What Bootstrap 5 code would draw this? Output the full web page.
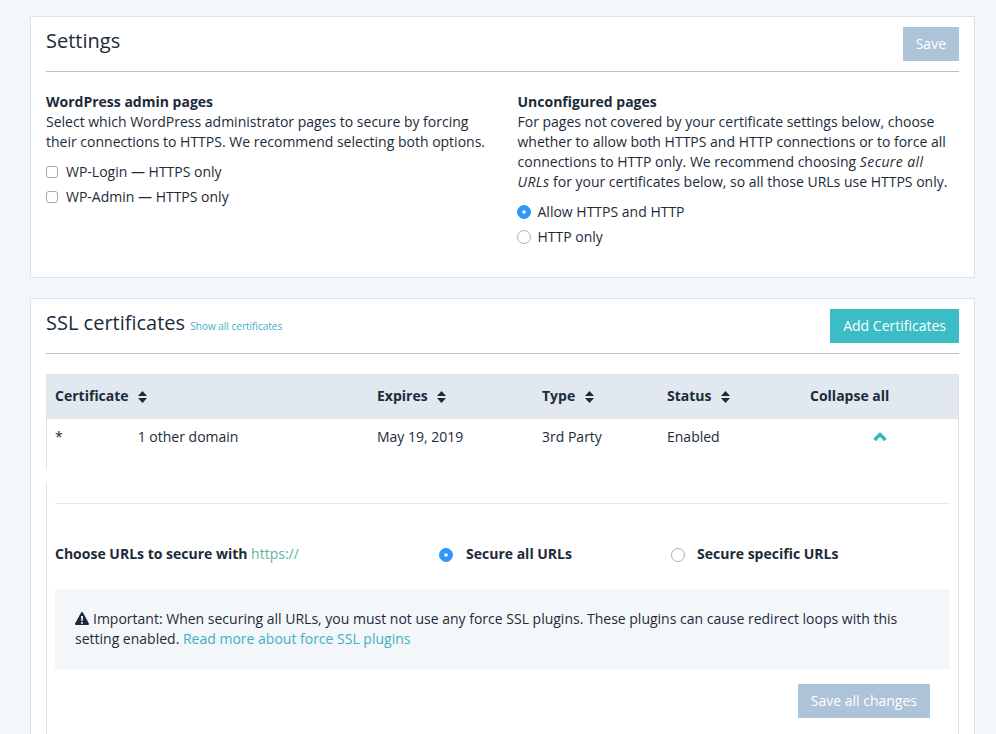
<!DOCTYPE html>
<html lang="en">
<head>
    <meta charset="UTF-8">
    <meta name="viewport" content="width=device-width, initial-scale=1.0">
    <title>SSL settings</title>
    <link href="https://cdn.jsdelivr.net/npm/bootstrap@5.3.3/dist/css/bootstrap.min.css" rel="stylesheet">
    <style>
        html, body {
            height: 734px;
            overflow: hidden;
        }
        body {
            background-color: #f4f7fa;
            color: #1c2b39;
            font-family: "Open Sans", "Liberation Sans", sans-serif;
            font-size: 14px;
            line-height: 20px;
            padding: 16px 21px 0 30px;
        }
        em {
            letter-spacing: .4px;
        }
        .panel-box {
            background-color: #fff;
            border: 1px solid #dfe2e6;
            padding: 10px 15px 0;
            margin-bottom: 20px;
        }
        .settings-box {
            height: 262px;
        }
        .panel-head {
            height: 45px;
            border-bottom: 1px solid #b3c0d1;
        }
        .panel-title {
            font-size: 20px;
            line-height: 28px;
            font-weight: 400;
            margin: 0;
        }
        .panel-title a {
            font-size: 10px;
            line-height: 14px;
        }
        .btn-save, .btn-save:disabled {
            background-color: #adc3d8;
            border: 0;
            border-radius: 0;
            color: #fff;
            opacity: 1;
            font-size: 14px;
            font-weight: 400;
            height: 34px;
            padding: 0 13px;
            line-height: 34px;
        }
        .btn-add {
            background-color: #3bbcc7;
            border: 0;
            border-radius: 0;
            color: #fff;
            font-size: 14px;
            font-weight: 400;
            height: 34px;
            padding: 0 13px;
            line-height: 34px;
        }
        .settings-row {
            --bs-gutter-x: 30px;
            margin-top: 20px;
        }
        .narrow-col {
            padding-right: 25px;
        }
        .option-line {
            display: flex;
            align-items: center;
            height: 25px;
        }
        .option-list {
            margin-top: 7px;
        }
        .check-input.form-check-input {
            width: 12px;
            height: 12px;
            margin: 0 8px 0 0;
            border: 1px solid #a9a9a9;
            border-radius: 3px;
            flex: none;
        }
        .radio-input.form-check-input {
            width: 14px;
            height: 14px;
            margin: 1px 7px 0 -1px;
            border: 1px solid #b0b0b0;
            flex: none;
        }
        .radio-input.form-check-input:checked {
            background-color: #2f96fa;
            border-color: #2f96fa;
        }
        .radio-input.form-check-input:checked[type=radio] {
            --bs-form-check-bg-image: url("data:image/svg+xml,%3csvg xmlns='http://www.w3.org/2000/svg' viewBox='-4 -4 8 8'%3e%3ccircle r='1.2' fill='%23fff'/%3e%3c/svg%3e");
        }
        .teal-link {
            color: #3dafc4;
            text-decoration: none;
        }
        .cert-box {
            position: relative;
            margin-top: 20px;
            border: 1px solid #dfe2e6;
            border-bottom: 0;
        }
        .border-gap {
            position: absolute;
            left: -1px;
            top: 94px;
            width: 1px;
            height: 14px;
            background-color: #fff;
        }
        .cert-table {
            table-layout: fixed;
            margin: 0;
            color: inherit;
            font-size: 14px;
        }
        .cert-table > :not(caption) > * > * {
            border: 0;
            box-shadow: none;
            padding: 0;
        }
        .cert-table thead th {
            background-color: #e1e8ef;
            height: 44px;
            padding-bottom: 2px;
            vertical-align: middle;
            font-weight: 700;
        }
        .cert-table tbody td.cell-main {
            height: 84px;
            padding-top: 8px;
            vertical-align: top;
        }
        .first-col {
            padding-left: 8px !important;
        }
        .sort-icon {
            width: 9px;
            height: 12px;
            margin-left: 6px;
            vertical-align: -2px;
        }
        .chevron-icon {
            width: 14px;
            height: 10px;
            margin: 5px 0 0 63px;
            display: block;
        }
        .domain-gap {
            display: inline-block;
            width: 75px;
        }
        .detail-area {
            margin: 0 8px;
            border-top: 1px solid #e1e8ef;
        }
        .choose-row {
            display: flex;
            align-items: center;
            height: 85px;
            padding-top: 15px;
            font-weight: 700;
        }
        .choose-label {
            width: 384px;
        }
        .choose-label span {
            font-weight: 400;
            color: #5eb3a0;
        }
        .choose-option {
            display: flex;
            align-items: center;
        }
        .choose-option .radio-input.form-check-input {
            margin: 1px 13px 0 0;
        }
        .choose-option.secure-specific .radio-input.form-check-input {
            margin-right: 12px;
        }
        .secure-all {
            width: 232px;
        }
        .notice-box {
            background-color: #f4f7fa;
            padding: 20px;
            height: 80px;
        }
        .warn-icon {
            width: 14px;
            height: 13px;
            margin-right: 4px;
            vertical-align: -1px;
        }
        .save-row {
            display: flex;
            justify-content: flex-end;
            padding: 15px 20px 60px 0;
        }
    </style>
</head>
<body>
    <!-- Settings -->
    <section class="panel-box settings-box">
        <div class="panel-head d-flex justify-content-between align-items-start">
            <h2 class="panel-title">Settings</h2>
            <button type="button" class="btn btn-save" disabled>Save</button>
        </div>
        <div class="row settings-row">
            <div class="col-6">
                <strong>WordPress admin pages</strong><br>
                Select which WordPress administrator pages to secure by forcing their connections to HTTPS. We recommend selecting both options.
                <div class="option-list">
                    <label class="option-line"><input class="form-check-input check-input" type="checkbox">WP-Login — HTTPS only</label>
                    <label class="option-line"><input class="form-check-input check-input" type="checkbox">WP-Admin — HTTPS only</label>
                </div>
            </div>
            <div class="col-6 narrow-col">
                <strong>Unconfigured pages</strong><br>
                For pages not covered by your certificate settings below, choose whether to allow both HTTPS and HTTP connections or to force all connections to HTTP only. We recommend choosing <em>Secure all URLs</em> for your certificates below, so all those URLs use HTTPS only.
                <div class="option-list">
                    <label class="option-line"><input class="form-check-input radio-input" type="radio" name="unconfigured" checked>Allow HTTPS and HTTP</label>
                    <label class="option-line"><input class="form-check-input radio-input" type="radio" name="unconfigured">HTTP only</label>
                </div>
            </div>
        </div>
    </section>

    <!-- SSL certificates -->
    <section class="panel-box">
        <div class="panel-head d-flex justify-content-between align-items-start">
            <h2 class="panel-title">SSL certificates <a class="teal-link" href="#">Show all certificates</a></h2>
            <button type="button" class="btn btn-add">Add Certificates</button>
        </div>
        <div class="cert-box">
            <span class="border-gap"></span>
            <table class="table cert-table">
                <colgroup>
                    <col style="width: 330px">
                    <col style="width: 165px">
                    <col style="width: 125px">
                    <col style="width: 143px">
                    <col>
                </colgroup>
                <thead>
                    <tr>
                        <th class="first-col">Certificate <svg class="sort-icon" viewBox="0 0 9 12"><path fill="#1c2b39" d="M4.5 0 9 5H0zM0 7h9l-4.500 5z"/></svg></th>
                        <th>Expires <svg class="sort-icon" viewBox="0 0 9 12"><path fill="#1c2b39" d="M4.5 0 9 5H0zM0 7h9l-4.500 5z"/></svg></th>
                        <th>Type <svg class="sort-icon" viewBox="0 0 9 12"><path fill="#1c2b39" d="M4.5 0 9 5H0zM0 7h9l-4.500 5z"/></svg></th>
                        <th>Status <svg class="sort-icon" viewBox="0 0 9 12"><path fill="#1c2b39" d="M4.5 0 9 5H0zM0 7h9l-4.500 5z"/></svg></th>
                        <th>Collapse all</th>
                    </tr>
                </thead>
                <tbody>
                    <tr>
                        <td class="cell-main first-col">*<span class="domain-gap"></span>1 other domain</td>
                        <td class="cell-main">May 19, 2019</td>
                        <td class="cell-main">3rd Party</td>
                        <td class="cell-main">Enabled</td>
                        <td class="cell-main"><svg class="chevron-icon" viewBox="0 0 14 10"><path fill="none" stroke="#3dafc4" stroke-width="3.500" d="M1.500 8 7 2.500 12.500 8"/></svg></td>
                    </tr>
                </tbody>
            </table>
            <div class="detail-area">
                <div class="choose-row">
                    <div class="choose-label">Choose URLs to secure with <span>https://</span></div>
                    <label class="choose-option secure-all"><input class="form-check-input radio-input" type="radio" name="urls" checked>Secure all URLs</label>
                    <label class="choose-option secure-specific"><input class="form-check-input radio-input" type="radio" name="urls">Secure specific URLs</label>
                </div>
                <div class="notice-box">
                    <svg class="warn-icon" viewBox="0 0 14 13"><path fill="#1c2b39" fill-rule="evenodd" d="M7 0c.4 0 .7.200.9.500l6 11c.4.700-.1 1.500-.9 1.500H1c-.8 0-1.300-.8-.9-1.500l6-11C6.300.2 6.600 0 7 0zM6 4l.3 5h1.400L8 4zm1 6a1 1 0 1 0 0 2 1 1 0 0 0 0-2z"/></svg>Important: When securing all URLs, you must not use any force SSL plugins. These plugins can cause redirect loops with this setting enabled. <a class="teal-link" href="#">Read more about force SSL plugins</a>
                </div>
                <div class="save-row">
                    <button type="button" class="btn btn-save" disabled>Save all changes</button>
                </div>
            </div>
        </div>
    </section>

    <script src="https://cdn.jsdelivr.net/npm/bootstrap@5.3.3/dist/js/bootstrap.bundle.min.js"></script>
</body>
</html>
